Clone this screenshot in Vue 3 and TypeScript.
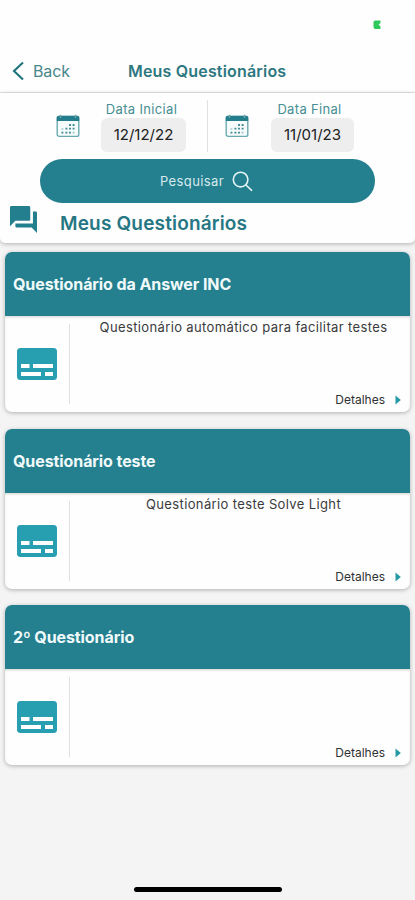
<script setup lang="ts">
interface Questionnaire {
  title: string
  description: string
}

interface DateField {
  label: string
  value: string
}

const dates: DateField[] = [
  { label: 'Data Inicial', value: '12/12/22' },
  { label: 'Data Final', value: '11/01/23' },
]

const questionnaires: Questionnaire[] = [
  { title: 'Questionário da Answer INC', description: 'Questionário automático para facilitar testes' },
  { title: 'Questionário teste', description: 'Questionário teste Solve Light' },
  { title: '2º Questionário', description: '' },
]
</script>

<template>
  <div class="screen">
    <header class="navbar">
      <div class="status">
        <svg class="battery" width="8" height="10" viewBox="0 0 8 10"><path d="M2 0.5H7.5V3L5.5 4.6L7.5 6.5V9H2Q0.5 8.5 0.5 6.5V2.5Q0.5 1 2 .5Z" fill="#2fc85c" /></svg>
      </div>
      <div class="nav-row">
        <button class="back">
          <svg width="13" height="20" viewBox="0 0 13 20"><path d="M11 1.5L2 10L11 18.5" fill="none" stroke="#20737d" stroke-width="2.1" /></svg>
          <span>Back</span>
        </button>
        <h1 class="nav-title">Meus Questionários</h1>
      </div>
    </header>

    <section class="filters">
      <div class="dates">
        <div v-for="d in dates" :key="d.label" class="date">
          <svg class="calendar" width="24" height="24" viewBox="0 0 24 24">
            <rect x="1.2" y="2.2" width="21.6" height="20.2" rx="2" fill="#f6fbfb" stroke="#6ba9b0" stroke-width="1.4" />
            <path d="M.8 7V3.7Q.8 2 2.5 2H21.5Q23.2 2 23.2 3.7V7Z" fill="#237d8b" />
            <path d="M4.5 .8V4M19.5 .8V4" stroke="#6fa7ae" stroke-width="1.5" />
            <path d="M13 11h2M16.6 11h2M9.4 14.6h2M13 14.6h2M16.6 14.6h2M5.4 18.6h2M9.4 18.6h2M13 18.6h2" stroke="#498e96" stroke-width="1.9" />
            <path d="M5.4 15h2M16.6 18.6h2" stroke="#a5c9cd" stroke-width="1.7" />
          </svg>
          <div class="field">
            <span class="label">{{ d.label }}</span>
            <span class="value">{{ d.value }}</span>
          </div>
        </div>
      </div>
      <button class="search">
        <span>Pesquisar</span>
        <svg width="21" height="21" viewBox="0 0 21 21" fill="none" stroke="#e4f4f5" stroke-width="1.6" stroke-linecap="round"><circle cx="8.6" cy="8.6" r="7.3" /><path d="M14 14L19.6 19.3" /></svg>
      </button>
      <div class="heading">
        <svg width="27" height="27" viewBox="2 2 20 20"><path fill="#237f8e" d="M21 6h-2v9H6v2c0 .55.45 1 1 1h11l4 4V7c0-.55-.45-1-1-1zm-4 6V3c0-.55-.45-1-1-1H3c-.55 0-1 .45-1 1v14l4-4h10c.55 0 1-.45 1-1z" /></svg>
        <h2>Meus Questionários</h2>
      </div>
    </section>

    <main class="list">
      <article v-for="q in questionnaires" :key="q.title" class="card">
        <h3 class="card-title">{{ q.title }}</h3>
        <div class="card-body">
          <div class="card-icon">
            <svg width="40" height="32" viewBox="0 0 40 32">
              <rect width="40" height="32" rx="3.5" fill="#279fb1" />
              <path d="M4 16h8.5v4H4zM16 16h20v4H16zM4 24h20v4H4zM28 24h8v4h-8z" fill="#fff" />
            </svg>
          </div>
          <div class="card-content">
            <p>{{ q.description }}</p>
            <a class="details">
              <span>Detalhes</span>
              <svg width="6" height="10" viewBox="0 0 6 10"><path d="M.5 .5L5.8 5L.5 9.5Z" fill="#2499a3" /></svg>
            </a>
          </div>
        </div>
      </article>
    </main>

    <footer class="home"><div class="home-bar"></div></footer>
  </div>
</template>

<style>
body { background: #f4f4f4; }
</style>

<style scoped>
* { box-sizing: border-box; }
.screen {
  width: 415px;
  height: 900px;
  display: flex;
  flex-direction: column;
  background: #f4f4f4;
  font-family: Inter, "Liberation Sans", sans-serif;
  overflow: hidden;
}
h1, h2, h3, p { margin: 0; white-space: nowrap; }
button { border: 0; padding: 0; background: none; font: inherit; }
.navbar { flex: none; height: 93px; background: #fefefe; border-bottom: 1px solid #e6e7e7; }
.status { height: 49px; display: flex; justify-content: flex-end; padding: 20px 34px 0 0; }
.nav-row { height: 43px; display: grid; grid-template-columns: 116px 1fr; align-items: center; padding-left: 12px; }
.back { display: flex; align-items: center; gap: 8px; color: #46868c; font-size: 16px; letter-spacing: -.1px; }
.nav-title { color: #2c7780; font-size: 16px; font-weight: 600; letter-spacing: .18px; }
.filters {
  flex: none;
  height: 150px;
  background: #fefefe;
  border-radius: 0 0 5px 5px;
  box-shadow: 0 1px 4px rgba(0, 0, 0, .28);
  display: flex;
  flex-direction: column;
}
.dates { height: 66px; display: grid; grid-template-columns: 208px 1fr; }
.date { display: flex; align-items: flex-start; padding: 8px 0 0 56px; }
.date + .date { padding-left: 17px; }
.date:first-child { background: linear-gradient(#dfe1e2, #dfe1e2) right 7px / 1px 52px no-repeat; }
.calendar { margin-top: 13px; flex: none; }
.field { display: flex; flex-direction: column; align-items: center; margin-left: 21px; width: 85px; }
.date + .date .field { margin-left: 22px; width: 83px; }
.label { height: 17px; line-height: 17px; font-size: 13px; letter-spacing: .33px; color: #468e93; white-space: nowrap; margin-left: -4px; }
.date + .date .label { margin-left: -6px; }
.value {
  width: 100%;
  height: 34px;
  line-height: 34px;
  border-radius: 6px;
  background: #eeeeef;
  text-align: center;
  font-size: 15px;
  color: #202122;
}
.search {
  flex: none;
  width: 335px;
  height: 44px;
  margin-left: 40px;
  border-radius: 22px;
  background: #247f8f;
  color: #d7eaec;
  font-size: 13px;
  letter-spacing: .4px;
  display: flex;
  justify-content: center;
  align-items: center;
  gap: 8px;
}
.search svg { margin-right: 2px; }
.heading { display: flex; align-items: center; height: 37px; padding-left: 10px; gap: 23px; margin-top: -1px; }
.heading svg { margin-top: -3px; }
.heading h2 { color: #267783; font-size: 19px; font-weight: 600; letter-spacing: .17px; margin-top: 5px; }
.list { flex: none; padding: 9px 5px 0; display: flex; flex-direction: column; gap: 16.3px; }
.card { height: 160.3px; border-radius: 7px; background: #fefefe; overflow: hidden; box-shadow: 0 1px 4px rgba(0, 0, 0, .28); }
.card { display: flex; flex-direction: column; }
.card-title {
  flex: none;
  height: 64px;
  line-height: 64px;
  padding-left: 8px;
  background: #247f8f;
  color: #f1fafa;
  font-size: 16px;
  font-weight: 700;
  letter-spacing: -.09px;
}
.card-body { flex: 1; display: flex; box-shadow: inset 0 2px 3px -1px rgba(0, 0, 0, .18); }
.card-icon { width: 65px; margin: 8px 0; border-right: 1px solid #dedfdf; display: flex; align-items: center; padding-left: 12px; }
.card-content { flex: 1; display: flex; flex-direction: column; justify-content: space-between; padding: 2px 9px 4px 16px; }
.card-content p { height: 18px; line-height: 18px; text-align: center; font-size: 13px; letter-spacing: .37px; color: #3a3b3c; }
.details { display: flex; align-self: flex-end; align-items: center; gap: 10px; font-size: 12px; line-height: 16px; color: #303132; }
.home { flex: 1; display: flex; justify-content: center; align-items: flex-end; padding-bottom: 8px; }
.home-bar { width: 148px; height: 5px; border-radius: 3px; background: #000; }
</style>
